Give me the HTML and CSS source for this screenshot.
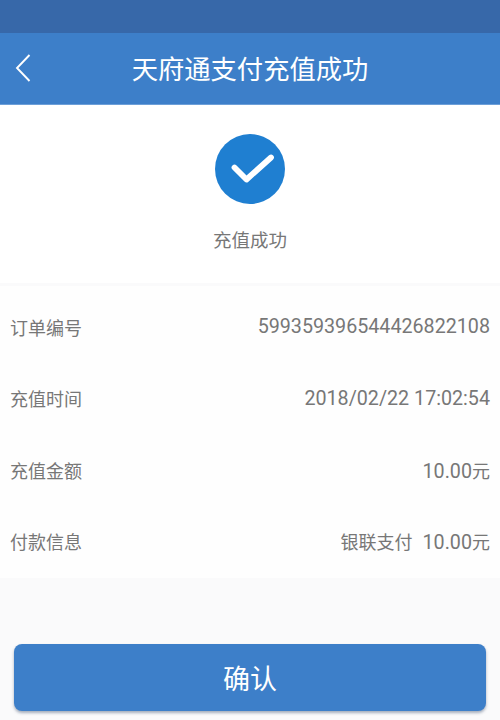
FILE: index.html
```html
<!DOCTYPE html>
<html lang="zh-CN">
<head>
<meta charset="utf-8">
<title>天府通支付充值成功</title>
<link rel="stylesheet" href="styles.css">
</head>
<body>
<div class="page">
  <div class="statusbar"></div>
  <header class="appbar">
    <svg class="back" viewBox="0 0 16 28" width="16" height="28"><path d="M14.5 1 L2 14 L14.5 27" fill="none" stroke="#fff" stroke-width="1.9"/></svg>
    <h1 class="title">天府通支付充值成功</h1>
  </header>
  <section class="result">
    <svg class="check" viewBox="0 0 70 70" width="70" height="70"><circle cx="35" cy="35" r="35" fill="#1f7fd1"/><path d="M19.5 33.5 L31.5 45.5 L56 23.5" fill="none" stroke="#fff" stroke-width="5.8" stroke-linecap="round" stroke-linejoin="round"/></svg>
    <p class="status">充值成功</p>
  </section>
  <section class="details">
    <div class="row"><span>订单编号</span><span class="num">599359396544426822108</span></div>
    <div class="row"><span>充值时间</span><span class="num">2018/02/22 17:02:54</span></div>
    <div class="row"><span>充值金额</span><span><span class="num">10.00</span>元</span></div>
    <div class="row"><span>付款信息</span><span class="pay"><span>银联支付</span><span><span class="num">10.00</span>元</span></span></div>
  </section>
  <div class="actions"><button class="confirm">确认</button></div>
</div>
</body>
</html>
```
FILE: styles.css
```css
* { box-sizing: border-box; }
html, body { margin: 0; padding: 0; }
body { width: 500px; height: 720px; overflow: hidden; background: #fafafb; font-family: Roboto, "Noto Sans CJK SC", sans-serif; }
.page { display: flex; flex-direction: column; height: 720px; }
.statusbar { height: 33px; background: #3768a9; }
.appbar { height: 72px; background: #3d7fc9; display: flex; align-items: center; justify-content: center; position: relative; border-bottom: 1px solid #6d9fd8; }
.back { position: absolute; left: 15px; top: 21px; }
.title { margin: 0 0 -3px; font-size: 26.3px; font-weight: 400; color: #fff; line-height: 1; }
.result { height: 178px; background: #fff; display: flex; flex-direction: column; align-items: center; padding-top: 29px; }
.status { margin: 25px 0 0; font-size: 18.5px; line-height: 24px; color: #777; }
.details { margin-top: 3px; height: 292px; background: #fefefe; padding-top: 5px; }
.row { height: 71.5px; display: flex; justify-content: space-between; align-items: center; padding: 0 10px; font-size: 18px; color: #777; }
.num { font-size: 19.7px; }
.pay { display: flex; align-items: center; gap: 10px; }
.actions { padding: 66px 14px 0; }
.confirm { display: block; width: 100%; height: 67px; border: 0; border-radius: 8px; background: #3d7fc9; color: #fff; font-family: inherit; font-size: 27px; box-shadow: 0 2px 3px rgba(60,80,110,.45); }
```
